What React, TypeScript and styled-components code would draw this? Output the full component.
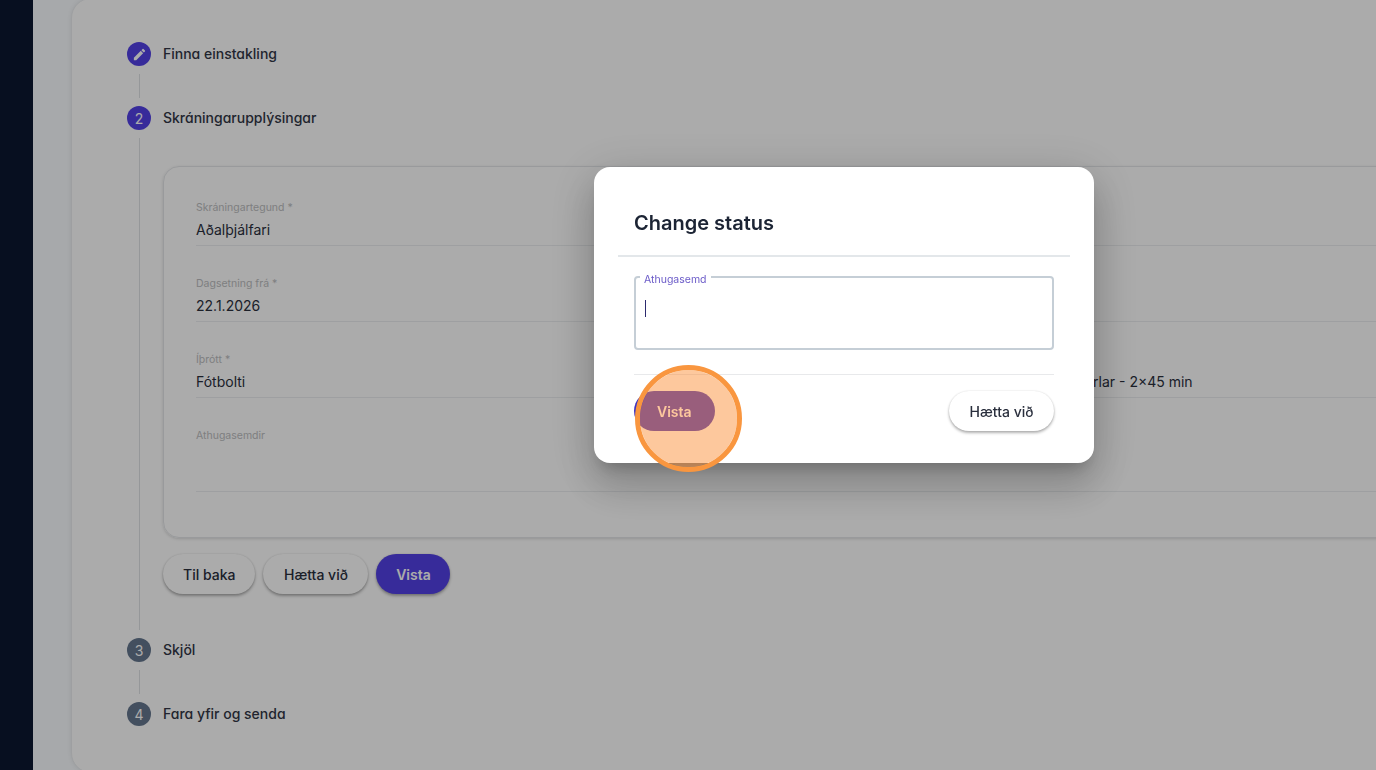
import styled, { createGlobalStyle } from 'styled-components';

const GlobalStyle = createGlobalStyle`
  html, body {
    margin: 0;
    height: 100%;
    overflow: hidden;
    font-family: Inter, "Noto Sans", sans-serif;
    color: #2a2f3d;
  }
  * {
    box-sizing: border-box;
  }
`;

const steps = [
  { id: 1, label: 'Finna einstakling', active: true, edit: true },
  { id: 2, label: 'Skráningarupplýsingar', active: true },
  { id: 3, label: 'Skjöl' },
  { id: 4, label: 'Fara yfir og senda' },
];

const EditIcon = () => (
  <svg width="15" height="15" viewBox="0 0 24 24" fill="currentColor">
    <path d="M3 17.25V21h3.75L17.81 9.94l-3.75-3.75L3 17.25zM20.71 7.04c.39-.39.39-1.02 0-1.41l-2.34-2.34a.9959.9959 0 0 0-1.41 0l-1.83 1.83 3.75 3.75 1.83-1.83z" />
  </svg>
);

const RegistrationForm = () => (
  <>
    <Panel>
      <Field>
        <FieldLabel>Skráningartegund *</FieldLabel>
        <FieldValue>Aðalþjálfari</FieldValue>
      </Field>
      <Field>
        <FieldLabel>Dagsetning frá *</FieldLabel>
        <FieldValue>22.1.2026</FieldValue>
      </Field>
      <FieldRow>
        <Field>
          <FieldLabel>Íþrótt *</FieldLabel>
          <FieldValue>Fótbolti</FieldValue>
        </Field>
        <Field>
          <FieldLabel>Flokkur *</FieldLabel>
          <FieldValue>Meistaraflokkur karlar - 2×45 min</FieldValue>
        </Field>
      </FieldRow>
      <Field>
        <FieldLabel>Athugasemdir</FieldLabel>
        <FieldValue $tall />
      </Field>
    </Panel>
    <Actions>
      <Button>Til baka</Button>
      <CancelButton>Hætta við</CancelButton>
      <SaveButton>Vista</SaveButton>
    </Actions>
  </>
);

const App = () => {
  return (
    <Page>
      <GlobalStyle />
      <Sidebar />
      <Main>
        <Card>
          {steps.map((step, i) => (
            <Step key={step.id}>
              <Rail>
                <StepCircle $active={step.active}>
                  {step.edit ? <EditIcon /> : step.id}
                </StepCircle>
                {i < steps.length - 1 && <Connector />}
              </Rail>
              <StepContent $last={i === steps.length - 1} $open={step.id === 2}>
                <StepLabel>{step.label}</StepLabel>
                {step.id === 2 && <RegistrationForm />}
              </StepContent>
            </Step>
          ))}
        </Card>
      </Main>
      <Overlay>
        <Modal>
          <ModalTitle>Change status</ModalTitle>
          <ModalRule />
          <ModalBody>
            <NoteBox>
              <NoteLegend>Athugasemd</NoteLegend>
              <Caret />
            </NoteBox>
            <FooterRule />
            <Footer>
              <ModalSave>Vista</ModalSave>
              <CancelButton>Hætta við</CancelButton>
              <Highlight />
            </Footer>
          </ModalBody>
        </Modal>
      </Overlay>
    </Page>
  );
};

const Page = styled.div`
  display: flex;
  height: 770px;
  overflow: hidden;
  background: #f9fcff;
`;

const Sidebar = styled.aside`
  flex: 0 0 33px;
  background: #0b1730;
`;

const Main = styled.main`
  flex: 1;
  min-width: 0;
  padding-left: 38px;
`;

const Card = styled.section`
  width: 1692px;
  margin-top: -2px;
  padding: 43px 0 46px 55px;
  background: #fff;
  border: 1px solid #eceef1;
  border-radius: 20px;
  box-shadow: 0 0 4px rgba(0, 0, 0, 0.08);
`;

const Step = styled.div`
  display: grid;
  grid-template-columns: 24px 1fr;
  column-gap: 12px;
`;

const Rail = styled.div`
  display: flex;
  flex-direction: column;
  align-items: center;
`;

const StepCircle = styled.div<{ $active?: boolean }>`
  flex: 0 0 24px;
  width: 24px;
  height: 24px;
  display: flex;
  align-items: center;
  justify-content: center;
  border-radius: 50%;
  font-size: 14px;
  color: #fff;
  background: ${(props) => (props.$active ? '#5341e6' : '#64768e')};
`;

const Connector = styled.div`
  flex: 1;
  width: 1px;
  margin: 8px 0;
  background: #dfe1e4;
`;

const StepContent = styled.div<{ $last?: boolean; $open?: boolean }>`
  padding-bottom: ${(props) => (props.$last ? 0 : props.$open ? 44 : 40)}px;
`;

const StepLabel = styled.div`
  height: 24px;
  line-height: 24px;
  font-size: 14px;
  font-weight: 500;
  color: #323746;
  font-feature-settings: 'cv11';
`;

const Panel = styled.div`
  margin-top: 36px;
  padding: 33px 32px 45px;
  display: flex;
  flex-direction: column;
  gap: 30px;
  border: 1px solid #e4e6e9;
  border-radius: 16px;
  box-shadow: 0 1px 3px rgba(0, 0, 0, 0.15);
`;

const FieldRow = styled.div`
  display: grid;
  grid-template-columns: 1fr 1fr;
  gap: 16px;
`;

const Field = styled.div``;

const FieldLabel = styled.div`
  height: 14px;
  line-height: 16px;
  font-size: 10.5px;
  color: #bcbdc0;
`;

const FieldValue = styled.div<{ $tall?: boolean }>`
  margin-top: 4px;
  height: ${(props) => (props.$tall ? 46 : 28)}px;
  padding-bottom: 3px;
  line-height: 24px;
  font-size: 14px;
  border-bottom: 1px solid #eceef0;
`;

const Actions = styled.div`
  display: flex;
  gap: 8px;
  margin-top: 16px;
`;

const Button = styled.button`
  height: 40px;
  padding: 0 20px;
  border: 0;
  border-radius: 20px;
  font-family: inherit;
  font-size: 14px;
  font-weight: 500;
  color: #2a2f3d;
  background: #fff;
  box-shadow: 0 2px 3px rgba(0, 0, 0, 0.3), 0 0 2px rgba(0, 0, 0, 0.12);
`;

const CancelButton = styled(Button)`
  width: 105px;
  padding: 0;
`;

const SaveButton = styled(Button)`
  width: 74px;
  padding: 0;
  font-weight: 600;
  color: #fff;
  background: #5341e6;
`;

const Overlay = styled.div`
  position: fixed;
  inset: 0;
  padding: 167px 0 0 594px;
  background: rgba(0, 0, 0, 0.33);
`;

const Modal = styled.div`
  width: 500px;
  height: 296px;
  padding: 44px 24px 0;
  background: #fff;
  border-radius: 16px;
  box-shadow: 0 11px 15px -7px rgba(0, 0, 0, 0.2), 0 24px 38px 3px rgba(0, 0, 0, 0.14),
    0 9px 46px 8px rgba(0, 0, 0, 0.12);
`;

const ModalTitle = styled.h2`
  margin: 0 0 20px;
  padding: 0 16px;
  height: 24px;
  line-height: 24px;
  font-size: 20px;
  font-weight: 600;
  color: #1c2434;
`;

const ModalRule = styled.div`
  height: 2px;
  background: #e3e7ea;
`;

const ModalBody = styled.div`
  padding: 10px 16px 0;
`;

const NoteBox = styled.fieldset`
  display: block;
  margin: 0;
  padding: 0 9px;
  height: 83px;
  min-width: 0;
  border: 2px solid #c5ced6;
  border-radius: 4px;
`;

const NoteLegend = styled.legend`
  margin-left: -5px;
  padding: 6px 4px 0;
  line-height: 14px;
  font-size: 10.5px;
  color: #6b5bc8;
`;

const Caret = styled.div`
  width: 1px;
  height: 17px;
  margin-top: 13px;
  background: #2c2a6e;
`;

const FooterRule = styled.div`
  height: 1px;
  margin-top: 24px;
  background: #e8e9eb;
`;

const Footer = styled.div`
  position: relative;
  display: flex;
  justify-content: space-between;
  margin-top: 16px;
`;

const ModalSave = styled.button`
  height: 40px;
  padding: 0 23px;
  border: 0;
  border-radius: 20px;
  font-family: inherit;
  font-size: 14px;
  font-weight: 600;
  color: #fff;
  background: #4035c0;
`;

const Highlight = styled.div`
  position: absolute;
  left: 1px;
  top: -26px;
  width: 107px;
  height: 107px;
  border: 5px solid #f9963f;
  border-radius: 50%;
  background: rgba(250, 140, 50, 0.48);
  background-clip: padding-box;
  pointer-events: none;
`;

export default App;
